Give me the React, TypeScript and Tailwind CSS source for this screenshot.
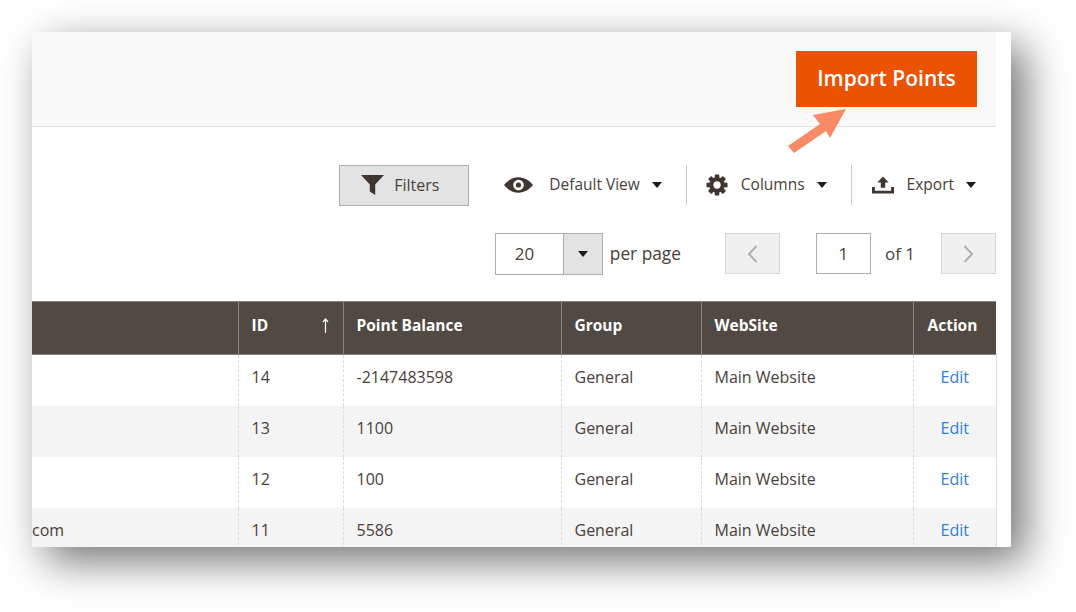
import React from 'react';

interface Row {
	id: number;
	balance: string;
	email?: string;
}

const rows: Row[] = [
	{ id: 14, balance: '-2147483598' },
	{ id: 13, balance: '1100' },
	{ id: 12, balance: '100' },
	{ id: 11, balance: '5586', email: 'com' },
];

const Caret = ({ className = '' }: { className?: string }) => (
	<svg width="10" height="6" viewBox="0 0 10 6" className={className}>
		<path d="M0 0h10L5 6z" fill="#1f1a18" />
	</svg>
);

const Funnel = () => (
	<svg width="23" height="20" viewBox="0 0 23 20">
		<path d="M0 0h23l-8.800 9.500V20l-5.400-3.400V9.500z" fill="#41362f" />
	</svg>
);

const Eye = () => (
	<svg width="29" height="16" viewBox="0 0 30 16">
		<path
			fillRule="evenodd"
			d="M15 0c6.500 0 11.500 3.800 15 8-3.500 4.200-8.500 8-15 8S3.500 12.200 0 8C3.500 3.800 8.500 0 15 0zm0 2.500a5.500 5.500 0 1 0 0 11 5.500 5.500 0 0 0 0-11zm0 2.800a2.700 2.700 0 1 1 0 5.400 2.700 2.700 0 0 1 0-5.400z"
			fill="#41362f"
		/>
	</svg>
);

const Gear = () => (
	<svg width="22" height="22" viewBox="0 0 24 24">
		<g fill="#41362f">
			<circle cx="12" cy="12" r="8.500" />
			<rect x="9.500" y="0.500" width="5" height="23" rx="1" />
			<rect x="9.500" y="0.500" width="5" height="23" rx="1" transform="rotate(45 12 12)" />
			<rect x="9.500" y="0.500" width="5" height="23" rx="1" transform="rotate(90 12 12)" />
			<rect x="9.500" y="0.500" width="5" height="23" rx="1" transform="rotate(135 12 12)" />
		</g>
		<circle cx="12" cy="12" r="4" fill="#fff" />
	</svg>
);

const Upload = () => (
	<svg width="22" height="18" viewBox="0 0 23 18">
		<path d="M11.500 0l6 6.500h-3.700V12H9.200V6.500H5.500z" fill="#41362f" />
		<path d="M0 11h3v4h17v-4h3v7H0z" fill="#41362f" />
	</svg>
);

const cellClass = 'px-[13px] pb-[6px] align-middle border-l border-dashed border-[#dcdcdc]';
const headClass = 'px-[13px] pb-[5px] text-left text-[15.500px] font-bold text-white border-l border-[#8a837e] first:border-l-0';

export default function App() {
	return (
		<div
			className="w-[1076px] h-[612px] overflow-hidden bg-white pt-[32px] pl-[32px] text-[#4a403a]"
			style={{ fontFamily: '"Open Sans", "Noto Sans", sans-serif' }}
		>
			<div className="relative w-[979px] h-[515px] overflow-hidden bg-white shadow-[14px_14px_40px_rgba(0,0,0,0.55)]">
				{/* top band */}
				<div className="flex w-[964px] h-[95px] justify-end bg-[#f8f8f8] border-b border-[#e3e3e3] pt-[19px] pr-[19px]">
					<button className="w-[181px] h-[56px] bg-[#eb5202] text-white text-[21px] font-semibold">
						Import Points
					</button>
				</div>

				{/* arrow */}
				<svg width="62" height="48" viewBox="0 0 62 48" className="absolute left-[755px] top-[75px]">
					<path d="M59 2L26 8l7 9L1 39l6 7 32-22 4 7z" fill="#f98a66" />
				</svg>

				{/* toolbar */}
				<div className="flex w-[964px] h-[41px] mt-[38px] pb-[1px] justify-end items-center text-[15.500px]">
					<button className="flex items-center w-[130px] h-[41px] pl-[21px] mr-[35px] bg-[#e3e3e3] border border-[#adadad] text-[16px]">
						<Funnel />
						<span className="ml-[10px] mb-[1px]">Filters</span>
					</button>
					<div className="flex items-center">
						<Eye />
						<span className="ml-[16px]">Default View</span>
						<Caret className="ml-[12px]" />
					</div>
					<div className="w-px h-[40px] bg-[#cccccc] ml-[24px] mr-[19px]" />
					<div className="flex items-center">
						<Gear />
						<span className="ml-[13px]">Columns</span>
						<Caret className="ml-[12px]" />
					</div>
					<div className="w-px h-[40px] bg-[#cccccc] ml-[24px] mr-[20px]" />
					<div className="flex items-center mr-[20px]">
						<Upload />
						<span className="ml-[13px]">Export</span>
						<Caret className="ml-[12px]" />
					</div>
				</div>

				{/* pagination */}
				<div className="flex w-[964px] h-[42px] mt-[27px] justify-end items-start text-[17px]">
					<div className="flex w-[108px] h-[42px] border border-[#adadad] bg-white">
						<span className="flex w-[67px] items-center pl-[19px]">20</span>
						<span className="flex flex-1 items-center justify-center bg-[#e3e3e3] border-l border-[#adadad]">
							<Caret />
						</span>
					</div>
					<span className="ml-[7px] mr-[44px] leading-[42px] text-[17.300px]">per page</span>
					<button className="flex w-[55px] h-[41px] items-center justify-center bg-[#f0f0f0] border border-[#d6d6d6]">
						<svg width="11" height="18" viewBox="0 0 11 18">
							<path d="M9.500 1L2 9l7.500 8" fill="none" stroke="#b0b0b0" strokeWidth="2" />
						</svg>
					</button>
					<div className="flex w-[55px] h-[41px] ml-[36px] items-center justify-center bg-white border border-[#adadad]">1</div>
					<span className="ml-[14px] mr-[26px] leading-[42px]">of 1</span>
					<button className="flex w-[55px] h-[41px] items-center justify-center bg-[#f0f0f0] border border-[#d6d6d6]">
						<svg width="11" height="18" viewBox="0 0 11 18">
							<path d="M1.500 1L9 9l-7.500 8" fill="none" stroke="#b0b0b0" strokeWidth="2" />
						</svg>
					</button>
				</div>

				{/* grid */}
				<table className="w-[964px] mt-[26px] table-fixed border-collapse text-[16px]">
					<colgroup>
						<col className="w-[206px]" />
						<col className="w-[105px]" />
						<col className="w-[218px]" />
						<col className="w-[140px]" />
						<col className="w-[212px]" />
						<col className="w-[83px]" />
					</colgroup>
					<thead>
						<tr className="h-[53px] bg-[#514943] border-y border-[#8a837e]">
							<th className={headClass}></th>
							<th className={headClass}>
								<div className="flex items-center justify-between">
									<span>ID</span>
									<svg width="7" height="16" viewBox="0 0 7 16" className="mr-[1px]">
										<path d="M3.500 1v14M1 4l2.500-3L6 4" fill="none" stroke="#fff" strokeWidth="1.200" />
									</svg>
								</div>
							</th>
							<th className={headClass}>Point Balance</th>
							<th className={headClass}>Group</th>
							<th className={headClass}>WebSite</th>
							<th className={`${headClass} pl-[14px]`}>Action</th>
						</tr>
					</thead>
					<tbody>
						{rows.map((row, i) => (
							<tr key={row.id} className={`h-[51px] ${i % 2 === 1 ? 'bg-[#f4f4f4]' : 'bg-white'}`}>
								<td className="pb-[6px] align-middle text-left">{row.email}</td>
								<td className={cellClass}>{row.id}</td>
								<td className={cellClass}>{row.balance}</td>
								<td className={cellClass}>General</td>
								<td className={cellClass}>Main Website</td>
								<td className={`${cellClass} pl-[27px] border-r [border-right-style:solid] text-[#2f80dc]`}>Edit</td>
							</tr>
						))}
					</tbody>
				</table>
			</div>
		</div>
	);
}
